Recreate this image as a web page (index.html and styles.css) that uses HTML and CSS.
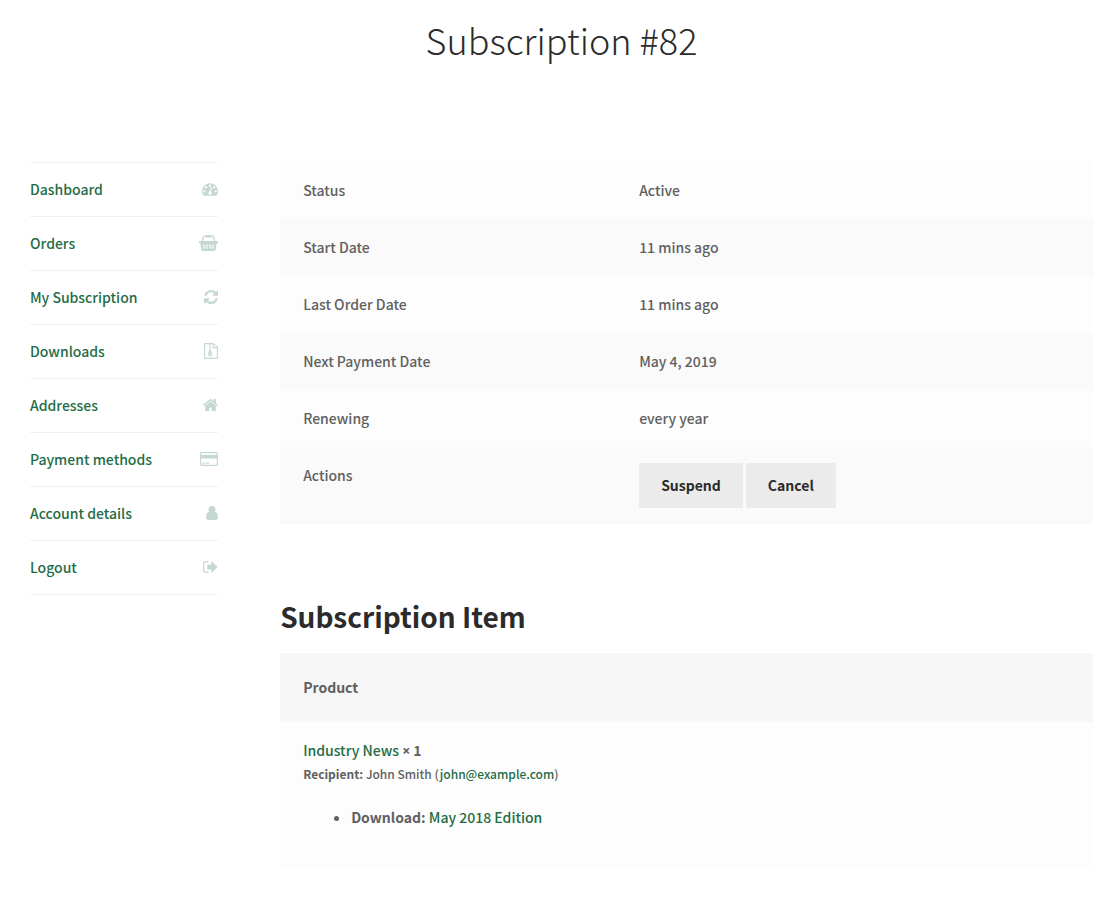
FILE: index.html
```
<!DOCTYPE html>
<html lang="en">
<head>
    <meta charset="UTF-8">
    <meta name="viewport" content="width=device-width, initial-scale=1.0">
    <title>Subscription #82</title>
    <link rel="stylesheet" href="styles.css">
</head>
<body>
    <div class="container">
        <header class="entry-header">
            <h1>Subscription #82</h1>
        </header>

        <div class="account">
            <nav class="account-nav">
                <ul>
                    <li>
                        <a href="#">Dashboard
                            <svg class="icon" width="16" height="16" viewBox="0 0 1792 1792"><path d="M384 1152q0-53-37.5-90.5t-90.5-37.5-90.5 37.5-37.5 90.5 37.5 90.5 90.5 37.5 90.5-37.5 37.5-90.5zm192-448q0-53-37.5-90.5t-90.5-37.5-90.5 37.5-37.5 90.5 37.5 90.5 90.5 37.5 90.5-37.5 37.5-90.5zm428 481l101-382q6-26-7.5-48.5t-38.5-29.5-48 6.5-30 39.5l-101 382q-60 5-107 43.5t-63 98.5q-20 77 20 146t117 89 146-20 89-117q16-60-6-117t-72-91zm660-33q0-53-37.5-90.5t-90.5-37.5-90.5 37.5-37.5 90.5 37.5 90.5 90.5 37.5 90.5-37.5 37.5-90.5zm-640-640q0-53-37.5-90.5t-90.5-37.5-90.5 37.5-37.5 90.5 37.5 90.5 90.5 37.5 90.5-37.5 37.5-90.5zm448 192q0-53-37.5-90.5t-90.5-37.5-90.5 37.5-37.5 90.5 37.5 90.5 90.5 37.5 90.5-37.5 37.5-90.5zm320 448q0 261-141 483-19 29-54 29h-1402q-35 0-54-29-141-221-141-483 0-182 71-348t191-286 286-191 348-71 348 71 286 191 191 286 71 348z"/></svg>
                        </a>
                    </li>
                    <li>
                        <a href="#">Orders
                            <svg class="icon" width="19" height="16" viewBox="0 0 19 16"><path fill-rule="evenodd" d="M1.2 6h16.6a1.2 1.2 0 0 1 0 2.500h-.2l-1 6.200a1.500 1.500 0 0 1-1.500 1.300H3.900a1.500 1.500 0 0 1-1.500-1.300l-1-6.200h-.2a1.200 1.200 0 0 1 0-2.500zM4.300 9.500l.4 4.200h1.200l-.4-4.200zM7.300 9.500v4.200h1.200v-4.200zM10.500 9.500v4.200h1.200v-4.200zM13.500 9.500l-.4 4.200h1.200l.4-4.200z"/><path d="M3.300 6.500L4.500 2.200Q4.800 1.200 5.900 1.200H13.100Q14.200 1.200 14.500 2.200L15.700 6.500" fill="none" stroke="currentColor" stroke-width="1.300"/><rect x="6.600" y="0" width="5.800" height="2.400" rx=".6"/></svg>
                        </a>
                    </li>
                    <li>
                        <a href="#">My Subscription
                            <svg class="icon" width="14" height="14" viewBox="128 128 1536 1536"><path d="M1639 1056q0 5-1 7-64 268-268 434.500t-478 166.500q-146 0-282.500-55t-243.500-157l-129 129q-19 19-45 19t-45-19-19-45v-448q0-26 19-45t45-19h448q26 0 45 19t19 45-19 45l-137 137q71 66 161 102t187 36q134 0 250-65t186-179q11-17 53-117 8-23 30-23h192q13 0 22.500 9.500t9.500 22.500zm25-800v448q0 26-19 45t-45 19h-448q-26 0-45-19t-19-45 19-45l138-138q-148-137-349-137-134 0-250 65t-186 179q-11 17-53 117-8 23-30 23h-199q-13 0-22.500-9.500t-9.500-22.500v-7q65-268 270-434.500t480-166.500q146 0 284 55.500t245 156.500l130-129q19-19 45-19t45 19 19 45z"/></svg>
                        </a>
                    </li>
                    <li>
                        <a href="#">Downloads
                            <svg class="icon" width="14" height="16" viewBox="0 0 14 16"><path fill-rule="evenodd" d="M.9 0h8.400q.5 0 .9.400l3.400 3.400q.4.400.4.900v10.400a.9.900 0 0 1-.9.900H.9a.9.900 0 0 1-.9-.9V.9A.9.900 0 0 1 .9 0zM1.200 1.200v13.600h11.600V5.200H9.700a.9.900 0 0 1-.9-.9V1.200H6.200v1H5v-1zM9.900 1.300V4h2.700z"/><path d="M5 2.200h1.200v1H5zM6.200 3.200h1.200v1H6.200zM5 4.200h1.200v1H5zM6.200 5.200h1.200v1H6.200zM5 6.200h1.200v1H5z"/><path fill-rule="evenodd" d="M5.200 7.200h1.900l1 3.700q.3 2.400-2 2.400t-2-2.400zM6.100 10.800c-1.300 0-1.300 1.300 0 1.300s1.300-1.300 0-1.300z"/></svg>
                        </a>
                    </li>
                    <li>
                        <a href="#">Addresses
                            <svg class="icon" width="15" height="12" viewBox="90 250 1612 1286"><path d="M1472 992v480q0 26-19 45t-45 19h-384v-384h-256v384h-384q-26 0-45-19t-19-45v-480q0-1 .5-3t.5-3l575-474 575 474q1 2 1 6zm223-69l-62 74q-8 9-21 11h-3q-13 0-21-7l-692-577-692 577q-12 8-24 7-13-2-21-11l-62-74q-8-10-7-23.500t11-21.500l719-599q32-26 76-26t76 26l244 204v-195q0-14 9-23t23-9h192q14 0 23 9t9 23v408l219 182q10 8 11 21.500t-7 23.500z"/></svg>
                        </a>
                    </li>
                    <li>
                        <a href="#">Payment methods
                            <svg class="icon" width="18" height="14" viewBox="0 0 18 14"><path fill-rule="evenodd" d="M1.500 0h15A1.500 1.500 0 0 1 18 1.500v11a1.500 1.500 0 0 1-1.500 1.500h-15A1.500 1.500 0 0 1 0 12.500v-11A1.500 1.500 0 0 1 1.500 0zM1.200 1.200v1.900h15.600V1.200zM1.200 6.500v6.300h15.600V6.500zM2.300 10.500h2.300v1.200H2.300zM5.700 10.500h3.500v1.200H5.700z"/></svg>
                        </a>
                    </li>
                    <li>
                        <a href="#">Account details
                            <svg class="icon" width="12" height="14" viewBox="0 0 12 14"><path d="M6 0a3.500 3.500 0 0 1 3.500 3.500q0 1.600-.8 2.600c2.500.2 3.300 2.400 3.300 5Q12 14 9.500 14h-7Q0 14 0 11.100c0-2.600.8-4.800 3.300-5q-.8-1-.8-2.600A3.500 3.500 0 0 1 6 0z"/></svg>
                        </a>
                    </li>
                    <li>
                        <a href="#">Logout
                            <svg class="icon" width="15" height="12" viewBox="0 0 15 12"><path d="M5.500 0v1.300H2.900Q1.300 1.300 1.300 2.900v6.200q0 1.600 1.600 1.600h2.600V12H2.900Q0 12 0 9.100V2.900Q0 0 2.900 0zM8.300.7q.5-.5 1 0l4.800 4.800q.5.500 0 1l-4.800 4.800q-.5.500-1 0V8.600H4.900q-.6 0-.6-.6V4q0-.6.6-.6h3.400z"/></svg>
                        </a>
                    </li>
                </ul>
            </nav>

            <main class="account-content">
                <table class="shop-table details">
                    <tbody>
                        <tr>
                            <td>Status</td>
                            <td>Active</td>
                        </tr>
                        <tr>
                            <td>Start Date</td>
                            <td>11 mins ago</td>
                        </tr>
                        <tr>
                            <td>Last Order Date</td>
                            <td>11 mins ago</td>
                        </tr>
                        <tr>
                            <td>Next Payment Date</td>
                            <td>May 4, 2019</td>
                        </tr>
                        <tr>
                            <td>Renewing</td>
                            <td>every year</td>
                        </tr>
                        <tr>
                            <td>Actions</td>
                            <td>
                                <div class="actions">
                                    <button type="button" class="button">Suspend</button>
                                    <button type="button" class="button">Cancel</button>
                                </div>
                            </td>
                        </tr>
                    </tbody>
                </table>

                <h2>Subscription Item</h2>
                <table class="shop-table items">
                    <thead>
                        <tr>
                            <th>Product</th>
                        </tr>
                    </thead>
                    <tbody>
                        <tr>
                            <td>
                                <a href="#">Industry News</a> <strong><span class="times">×</span> 1</strong>
                                <div class="recipient"><strong>Recipient:</strong> John Smith (<a href="#">john@example.com</a>)</div>
                                <ul class="downloads">
                                    <li><strong>Download:</strong> <a href="#">May 2018 Edition</a></li>
                                </ul>
                            </td>
                        </tr>
                    </tbody>
                </table>
            </main>
        </div>
    </div>
</body>
</html>
```
FILE: styles.css
```
body {
    margin: 0;
    background-color: #fff;
    color: #606060;
    font-family: "Source Sans Pro", "Noto Sans CJK SC", sans-serif;
    font-size: 14px;
    font-weight: 500;
    line-height: 25px;
}

a {
    color: #1f6c46;
    text-decoration: none;
}

.container {
    padding: 0 25px 0 30px;
}

.entry-header {
    padding: 12px 0 96px;
    text-align: center;
}

h1 {
    margin: 0;
    font-size: 36px;
    font-weight: 300;
    line-height: 54px;
    color: #2b2b2b;
}

.account {
    display: flex;
    justify-content: space-between;
    align-items: flex-start;
}

.account-nav {
    width: 17.7%;
}

.account-nav ul {
    margin: 0;
    padding: 0;
    list-style: none;
    border-top: 1px solid #f0f0f0;
}

.account-nav li {
    border-bottom: 1px solid #f0f0f0;
}

.account-nav a {
    display: flex;
    justify-content: space-between;
    align-items: center;
    padding: 14px 0;
}

.icon {
    flex: none;
    margin-bottom: 2px;
    fill: currentColor;
    opacity: 0.25;
}

.account-content {
    width: 76.47%;
}

.shop-table {
    width: 100%;
    border-collapse: collapse;
}

.shop-table td {
    padding: 16px 23px;
    text-align: left;
    vertical-align: top;
    background-color: #fdfdfd;
}

.details tr:nth-child(even) td {
    background-color: #fafafa;
}

.details td:first-child {
    width: 290px;
}

.actions {
    display: flex;
    gap: 3px;
}

.button {
    padding: 10px 22px;
    border: none;
    background-color: #ebebeb;
    color: #2b2b2b;
    font: inherit;
    font-weight: 700;
    cursor: pointer;
}

.button:hover {
    background-color: #d5d5d5;
}

h2 {
    margin: 71px 0 15px;
    font-size: 28px;
    font-weight: 700;
    line-height: 43px;
    color: #2b2b2b;
}

.shop-table th {
    padding: 22px 23px;
    text-align: left;
    font-weight: 700;
    background-color: #f7f7f7;
}

.times {
    font-family: "Open Sans", sans-serif;
}

.recipient {
    font-size: 12px;
    line-height: 22px;
}

.downloads {
    margin: 20px 0 22px;
    padding-left: 48px;
}
```
